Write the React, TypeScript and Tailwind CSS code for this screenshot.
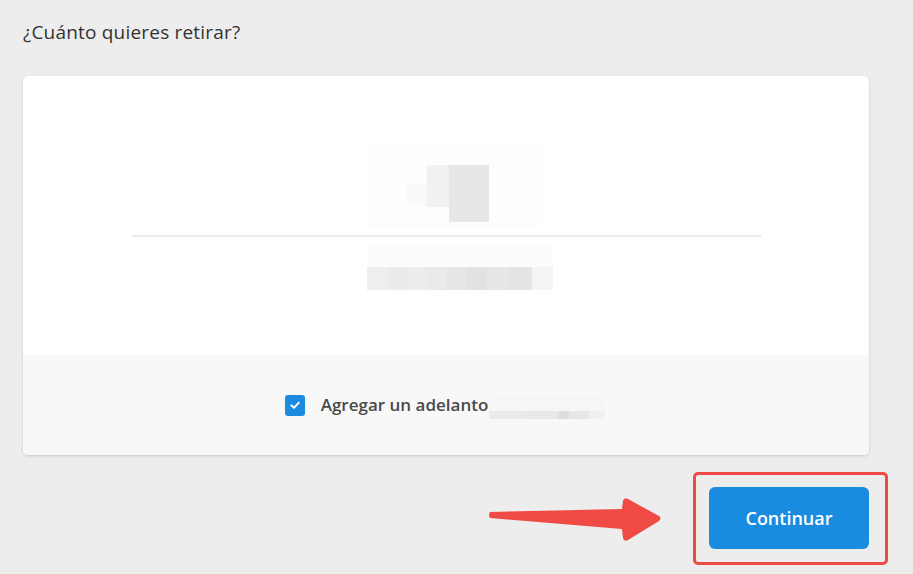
import React from "react";

function Amount() {
  return (
    <div className="flex flex-col items-center">
      <div className="relative ml-[16px] h-[84px] w-[176px] bg-[#fdfdfd]">
        <div className="absolute left-[41px] top-[40px] h-[22px] w-[20px] bg-[#f9f9f9]" />
        <div className="absolute left-[61px] top-[22px] h-[42px] w-[22px] bg-[#f1f1f1]" />
        <div className="absolute left-[83px] top-[22px] h-[57px] w-[40px] bg-[#e7e7e7]" />
      </div>
      <div className="mt-[8px] h-[2px] w-[629px] bg-[#ebebeb]" />
      <div className="ml-[28px] mt-[8px] flex w-[186px] flex-col">
        <div className="h-[22px] bg-[#fcfcfc]" />
        <div className="flex h-[23px]">
          <div className="w-[20px] bg-[#eeeeee]" />
          <div className="w-[20px] bg-[#ebebeb]" />
          <div className="w-[20px] bg-[#ececec]" />
          <div className="w-[20px] bg-[#eaeaea]" />
          <div className="w-[20px] bg-[#e6e6e6]" />
          <div className="w-[20px] bg-[#e2e2e2]" />
          <div className="w-[20px] bg-[#e7e7e7]" />
          <div className="w-[25px] bg-[#e4e4e4]" />
          <div className="w-[21px] bg-[#f4f4f4]" />
        </div>
      </div>
    </div>
  );
}

function Arrow() {
  return (
    <svg width="176" height="46" viewBox="0 0 176 46" className="block">
      <path
        d="M2 15 L134 12 L135 4 Q136 0 140 2 L171 19 Q174 21 171 24 L140 43 Q136 45 135 41 L134 32 L2 21 Q0 18 2 15 Z"
        fill="#f04a44"
      />
    </svg>
  );
}

export default function App() {
  return (
    <div
      className="min-h-[574px] w-full bg-[#ededed] px-[23px] pt-[19px]"
      style={{ fontFamily: '"Open Sans", "Liberation Sans", sans-serif' }}
    >
      <h1 className="text-[19px] leading-[26px] tracking-[0.2px] text-[#333333]">¿Cuánto quieres retirar?</h1>

      <div className="mt-[31px] w-[846px] overflow-hidden rounded-[5px] bg-white shadow-[0_1px_3px_rgba(0,0,0,0.15)]">
        <div className="flex h-[279px] flex-col items-center pt-[67px]">
          <Amount />
        </div>
        <div className="flex h-[100px] items-center justify-center bg-[#f8f8f8] pr-[2px]">
          <div className="flex items-center">
            <div className="mr-[16px] flex h-[21px] w-[20px] items-center justify-center rounded-[3px] bg-[#1b8be0]">
              <svg width="12" height="12" viewBox="0 0 12 12">
                <path d="M2.3 6.3 L5 8.9 L9.8 3.6" fill="none" stroke="white" strokeWidth="1.9" strokeLinecap="round" strokeLinejoin="round" />
              </svg>
            </div>
            <span className="text-[17px] font-semibold text-[#4a4a4a]">Agregar un adelanto</span>
            <div className="ml-[1px] mt-[4px] flex h-[24px] w-[116px] flex-col">
              <div className="h-[16px] bg-[#f6f6f6]" />
              <div className="flex h-[8px]">
                <div className="w-[34px] bg-[#eaeaea]" />
                <div className="w-[36px] bg-[#e8e8e8]" />
                <div className="w-[10px] bg-[#dddddd]" />
                <div className="w-[20px] bg-[#e7e7e7]" />
                <div className="w-[16px] bg-[#f0f0f0]" />
              </div>
            </div>
          </div>
        </div>
      </div>

      <div className="mt-[32px] flex w-[846px] items-center justify-end">
        <div className="mr-[45px] mt-[4px]">
          <Arrow />
        </div>
        <div className="relative">
          <div className="pointer-events-none absolute -top-[15px] -bottom-[16px] -left-[16px] -right-[19px] rounded-[5px] border-[3px] border-[#f04a45]" />
          <button className="flex h-[62px] w-[160px] items-center justify-center rounded-[6px] bg-[#1a8ce0] text-[18px] font-semibold text-white">
            Continuar
          </button>
        </div>
      </div>
    </div>
  );
}
